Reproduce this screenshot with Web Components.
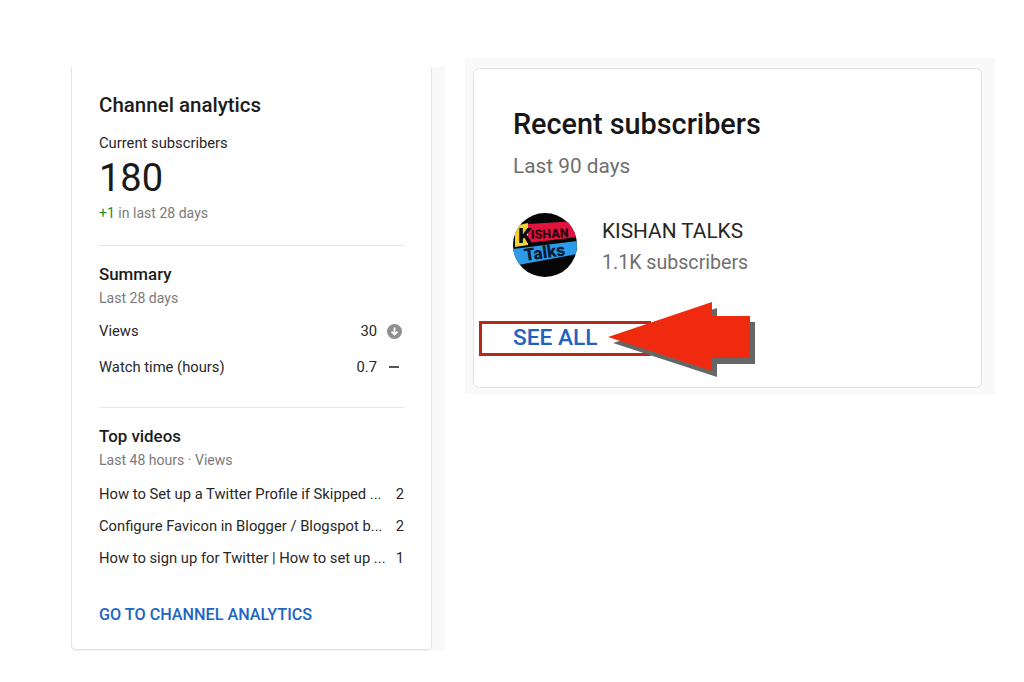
<!DOCTYPE html>
<html><head><meta charset="utf-8"><title>Channel dashboard</title>
<style>
html,body{margin:0;background:#fff}
body{width:1024px;height:682px;overflow:hidden;font-family:Roboto,"Liberation Sans",sans-serif;color:#1f1f1f}
main{display:flex;align-items:flex-start;padding-left:71px}
</style></head><body>
<main>
<analytics-card></analytics-card>
<subscribers-card></subscribers-card>
</main>
<template id="row-t"><style>
:host{display:flex;justify-content:space-between;align-items:center;font-size:14.77px;height:32px;color:#282828}
.l{white-space:nowrap;overflow:hidden}
.r{display:flex;align-items:center}
</style><span class="l"><slot></slot></span><span class="r"><slot name="r"></slot></span></template>
<script>
const rowT=document.getElementById('row-t');
class MetricRow extends HTMLElement{constructor(){super();this.attachShadow({mode:'open'}).appendChild(rowT.content.cloneNode(true));}}
customElements.define('metric-row',MetricRow);

class AnalyticsCard extends HTMLElement{constructor(){super();this.attachShadow({mode:'open'}).innerHTML=`<style>
:host{display:block;margin-top:67px;width:374px;height:583px;background:#f9f9f9;flex:none;box-sizing:border-box;padding-right:13px}
.card{box-sizing:border-box;height:583px;background:#fff;border:1px solid #e4e4e4;border-top:0;border-radius:0 0 5px 5px;padding:26px 27px 0 27px;box-shadow:0 1px 1px #eee}
h2{margin:0;font-size:20.5px;line-height:24px;font-weight:500;color:#1c1c1c}
h3{margin:0;font-size:16.9px;line-height:20px;font-weight:500;color:#1c1c1c}
.label{font-size:14.75px;line-height:18px;margin-top:17px;color:#282828}
.big{font-size:38px;line-height:48px;margin-top:2px;font-weight:400;color:#1a1a1a}
.sub{font-size:14.05px;line-height:16px;color:#7b7b7b}
.sub b{font-weight:400;color:#2c8a33}
hr{border:0;border-top:1px solid #e8e8e8;margin:0}
.down{width:15px;height:15px;margin-left:10px;margin-right:2px;display:block}
.dash{width:10px;height:2px;background:#555;margin-left:12px;margin-right:5px;display:block}
.sum{margin-top:7px}
.sum metric-row{height:36px}
.vid{margin-top:10px}
a{display:block;margin-top:31px;color:#2065c4;font-size:16.2px;font-weight:500;line-height:20px;white-space:nowrap}
</style><div class="card">
<h2>Channel analytics</h2>
<div class="label">Current subscribers</div>
<div class="big">180</div>
<div class="sub" style="margin-top:3px"><b>+1</b> in last 28 days</div>
<hr style="margin-top:24px">
<h3 style="margin-top:18px">Summary</h3>
<div class="sub" style="margin-top:6px">Last 28 days</div>
<div class="sum">
<metric-row>Views<span slot="r" style="display:flex;align-items:center">30<svg class="down" viewBox="0 0 15 15"><circle cx="7.5" cy="7.5" r="7.5" fill="#8e8e8e"/><path d="M7.5 3.5v7M4.5 7.6l3 3 3-3" fill="none" stroke="#fff" stroke-width="1.8"/></svg></span></metric-row>
<metric-row>Watch time (hours)<span slot="r" style="display:flex;align-items:center">0.7<i class="dash"></i></span></metric-row>
</div>
<hr style="margin-top:22px">
<h3 style="margin-top:18px">Top videos</h3>
<div class="sub" style="margin-top:6px">Last 48 hours · Views</div>
<div class="vid">
<metric-row>How to Set up a Twitter Profile if Skipped ...<span slot="r" style="margin-right:0">2</span></metric-row>
<metric-row>Configure Favicon in Blogger / Blogspot b...<span slot="r">2</span></metric-row>
<metric-row>How to sign up for Twitter | How to set up ...<span slot="r">1</span></metric-row>
</div>
<a>GO TO CHANNEL ANALYTICS</a>
</div>`;}}
customElements.define('analytics-card',AnalyticsCard);

class ChannelAvatar extends HTMLElement{constructor(){super();this.attachShadow({mode:'open'}).innerHTML=`<style>:host{display:block;width:64px;height:64px;flex:none}svg{display:block}</style>
<svg width="64" height="64" viewBox="0 0 64 64"><defs><clipPath id="c"><circle cx="32" cy="32" r="32"/></clipPath></defs>
<g clip-path="url(#c)"><rect width="64" height="64" fill="#060606"/>
<path d="M2 13 15 10V32L2 34Z" fill="#f4d335"/><path d="M15 11 64 8V24L15 30Z" fill="#e0143c"/>
<path d="M0 36 64 28V41L0 53Z" fill="#2d9bea"/>
<text x="5" y="30" font-family="Roboto,sans-serif" font-weight="900" font-size="21" fill="#0a0a0a">K</text>
<text x="18" y="26" font-family="Roboto,sans-serif" font-weight="900" font-size="12.5" fill="#2a0610" transform="rotate(-3 18 26)">ISHAN</text>
<text x="12" y="48" font-family="Roboto,sans-serif" font-weight="900" font-size="17" fill="#0b1d33" transform="rotate(-8 12 48)">Talks</text></g></svg>`;}}
customElements.define('channel-avatar',ChannelAvatar);

class SubscribersCard extends HTMLElement{constructor(){super();this.attachShadow({mode:'open'}).innerHTML=`<style>
:host{display:block;position:relative;margin:58px 0 0 20px;width:530px;height:336px;background:#f9f9f9;box-sizing:border-box;padding:10px 13px 6px 8px;flex:none}
.card{box-sizing:border-box;height:320px;background:#fff;border:1px solid #e2e2e2;border-radius:6px;padding:37px 39px 0}
h2{margin:0;font-size:28.8px;line-height:36px;font-weight:500;color:#171717}
.p{margin-top:11px;font-size:20.8px;line-height:26px;color:#6f6f6f}
.ch{display:flex;align-items:center;gap:25px;margin-top:34px}
.tx{padding-top:3px}
.n{font-size:20.8px;line-height:26px;color:#262626}
.s{font-size:19.6px;line-height:26px;color:#6f6f6f;margin-top:6px}
a{display:block;margin-top:46px;color:#1f62c0;font-size:22.7px;font-weight:500;line-height:30px;white-space:nowrap}
.mark{position:absolute;left:14px;top:263px;width:172px;height:35px;box-sizing:border-box;border:3px solid #b8291b}
svg.ar{position:absolute;left:0;top:0;pointer-events:none}
</style><div class="card">
<h2>Recent subscribers</h2>
<div class="p">Last 90 days</div>
<div class="ch"><channel-avatar></channel-avatar><div class="tx"><div class="n">KISHAN TALKS</div><div class="s">1.1K subscribers</div></div></div>
<a>SEE ALL</a>
</div>
<div class="mark"></div>
<svg class="ar" width="530" height="336" viewBox="465 58 530 336">
<polygon transform="translate(5 6)" points="608,337 712,302 712,316 750,316 750,358 712,358 712,371" fill="#666"/>
<polygon points="608,337 712,302 712,316 750,316 750,358 712,358 712,371" fill="#f02a0e"/>
</svg>`;}}
customElements.define('subscribers-card',SubscribersCard);
</script>
</body></html>
